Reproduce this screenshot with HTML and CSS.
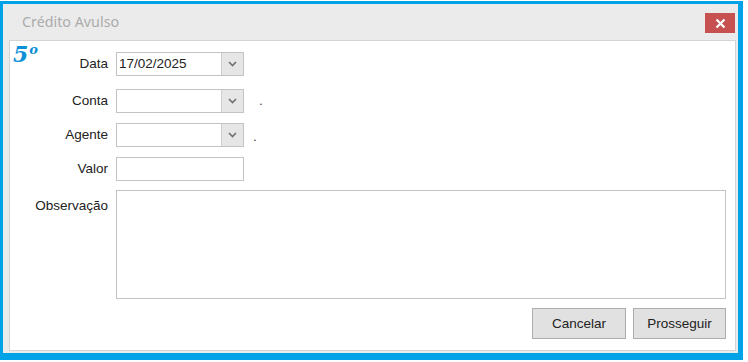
FILE: index.html
```html
<!DOCTYPE html>
<html lang="pt">
<head>
<meta charset="utf-8">
<title>Crédito Avulso</title>
<link rel="stylesheet" href="styles.css">
</head>
<body>
<div class="frame">
  <div class="titlebar">
    <span class="title">Crédito Avulso</span>
    <button class="close" aria-label="Fechar">
      <svg width="11" height="11" viewBox="0 0 11 11"><path d="M1.5 1.5 L9.5 9.5 M9.5 1.5 L1.5 9.5" stroke="#fff" stroke-width="2.2" fill="none"/></svg>
    </button>
  </div>
  <div class="panel">
    <span class="badge">5<span class="ord">o</span></span>
    <div class="form">
      <label class="lbl">Data</label>
      <div class="field">
        <div class="combo"><span class="val">17/02/2025</span><span class="drop"><svg width="9" height="6" viewBox="0 0 9 6"><path d="M1 1 L4.5 4.5 L8 1" stroke="#707070" stroke-width="1.6" fill="none"/></svg></span></div>
      </div>
      <label class="lbl push">Conta</label>
      <div class="field push">
        <div class="combo"><span class="val"></span><span class="drop"><svg width="9" height="6" viewBox="0 0 9 6"><path d="M1 1 L4.5 4.5 L8 1" stroke="#707070" stroke-width="1.6" fill="none"/></svg></span></div>
        <span class="dot dot-conta">.</span>
      </div>
      <label class="lbl">Agente</label>
      <div class="field">
        <div class="combo"><span class="val"></span><span class="drop"><svg width="9" height="6" viewBox="0 0 9 6"><path d="M1 1 L4.5 4.5 L8 1" stroke="#707070" stroke-width="1.6" fill="none"/></svg></span></div>
        <span class="dot dot-agente">.</span>
      </div>
      <label class="lbl">Valor</label>
      <div class="field">
        <div class="text"></div>
      </div>
      <label class="lbl lbl-top">Observação</label>
      <div class="area"></div>
    </div>
    <div class="actions">
      <button class="btn">Cancelar</button>
      <button class="btn">Prosseguir</button>
    </div>
  </div>
</div>
</body>
</html>
```
FILE: styles.css
```css
* { box-sizing: border-box; }
html, body { margin: 0; padding: 0; background: #fff; }
body { font-family: "Liberation Sans", Arial, sans-serif; }

.frame {
  margin: 1px 5px 0 0;
  width: 743px;
  height: 359px;
  border-style: solid;
  border-color: #00a2e8;
  border-width: 3px 5px 7px 3px;
  background: #ebebeb;
  padding: 0 2px 2px 6px;
  display: flex;
  flex-direction: column;
}

.titlebar {
  height: 36px;
  display: flex;
  align-items: flex-start;
  justify-content: space-between;
  margin-left: -6px;
  margin-right: 1px;
}
.title {
  margin: 10px 0 0 19px;
  font-family: "Noto Sans", "Open Sans", sans-serif;
  font-size: 14.3px;
  color: #ababab;
  line-height: 16px;
}
.close {
  margin-top: 9px;
  width: 30px;
  height: 20px;
  border: 0;
  padding: 0;
  background: #c75050;
  display: flex;
  align-items: center;
  justify-content: center;
}

.panel {
  position: relative;
  flex: 1;
  background: #fff;
  border: 1px solid #d4d4d4;
  padding: 11px 9px 0 0;
  font-size: 13.5px;
  color: #222;
}
.badge {
  position: absolute;
  left: 3px;
  top: 1px;
  font-family: "DejaVu Serif", serif;
  font-weight: bold;
  font-style: italic;
  font-size: 22px;
  color: #0b8fd6;
  line-height: 24px;
  display: flex;
  align-items: flex-start;
}
.ord {
  font-size: 13px;
  line-height: 13px;
  margin-left: 1px;
  margin-top: 1px;
}

.form {
  display: grid;
  grid-template-columns: 98px 1fr;
  column-gap: 8px;
  row-gap: 10px;
}
.push { margin-top: 3px; }
.lbl {
  text-align: right;
  height: 24px;
  line-height: 24px;
  white-space: nowrap;
}
.lbl-top { line-height: 16px; padding-top: 7px; }
.field { display: flex; align-items: center; height: 24px; }
.combo {
  width: 128px;
  height: 24px;
  border: 1px solid #c3c3c3;
  display: flex;
}
.val { flex: 1; line-height: 22px; padding-left: 2px; }
.drop {
  width: 22px;
  background: #e6e6e6;
  border-left: 1px solid #cfcfcf;
  display: flex;
  align-items: center;
  justify-content: center;
}
.dot { line-height: 16px; align-self: flex-end; margin-bottom: 2px; color: #444; }
.dot-conta { margin-left: 15px; margin-bottom: 4px; }
.dot-agente { margin-left: 9px; }
.text {
  width: 128px;
  height: 24px;
  border: 1px solid #c3c3c3;
}
.area {
  height: 109px;
  border: 1px solid #c3c3c3;
  margin-top: -1px;
}

.actions {
  display: flex;
  justify-content: flex-end;
  gap: 7px;
  margin-top: 9px;
}
.btn {
  height: 31px;
  border: 1px solid #adadad;
  background: #e1e1e1;
  font-family: "Liberation Sans", Arial, sans-serif;
  font-size: 13.5px;
  color: #222;
  padding: 0;
}
.btn:first-child { width: 94px; }
.btn:last-child { width: 93px; }
```
